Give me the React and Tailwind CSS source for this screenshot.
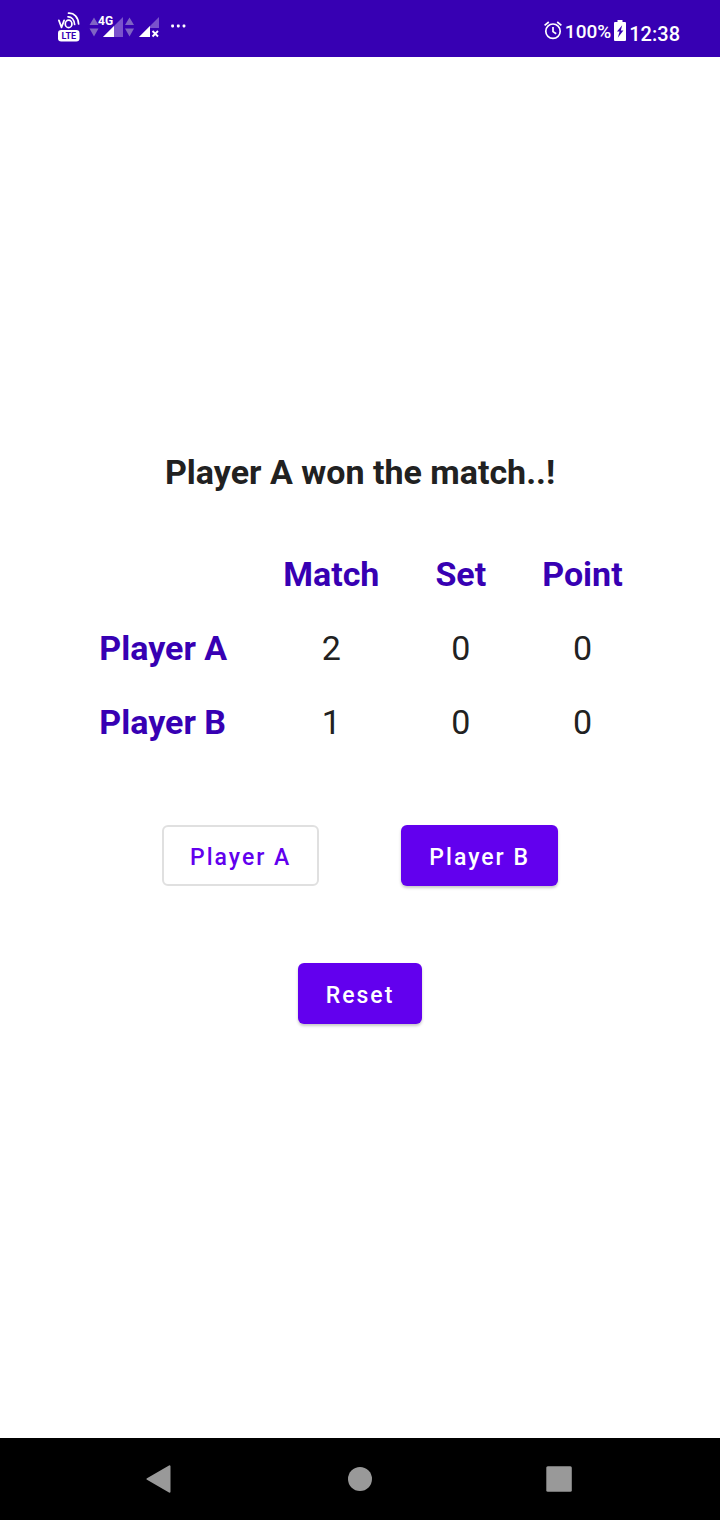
import React, { useState } from "react";

function VolteIcon() {
  return (
    <svg width="22" height="30" viewBox="0 0 22 30" aria-label="VoLTE" className="shrink-0">
      <g fill="none" stroke="#fff" strokeWidth="1.7" strokeLinecap="round">
        <path d="M0.9 8.4 L3.5 15.4 L6.1 8.4" strokeLinejoin="round" />
        <ellipse cx="10.6" cy="11.9" rx="3.3" ry="3.7" />
        <path d="M10 4.8 C13.5 4.6 16.2 7.5 16.6 12.5" />
        <path d="M10.5 1.2 C16 0.8 20.3 5 20.6 12" />
      </g>
      <rect x="0" y="18" width="21.5" height="11.5" rx="3.2" fill="#fff" />
      <text x="10.8" y="27" textAnchor="middle" fontSize="9" fontWeight="700" fill="#3700b3" className="font-['Roboto',sans-serif]">
        LTE
      </text>
    </svg>
  );
}

function SignalFourG() {
  return (
    <svg width="34" height="26" viewBox="0 0 34 26" aria-label="4G signal" className="shrink-0">
      <path d="M5 3.5 L9.5 11 H0.5 Z M0.5 14.5 H9.5 L5 22.5 Z" fill="#7f64c4" />
      <path d="M14 23 L34 3 V23 Z" fill="#7a52cc" />
      <path d="M14 23 L25 12 V23 Z" fill="#fff" />
      <path d="M10 0 H24 V11.5 H10 Z" fill="#3700b3" />
      <text x="9" y="11" fontSize="12" fontWeight="700" fill="#fff" className="font-['Roboto',sans-serif]">
        4G
      </text>
    </svg>
  );
}

function SignalNone() {
  return (
    <svg width="34" height="26" viewBox="0 0 34 26" aria-label="No signal" className="shrink-0">
      <path d="M4.5 3.5 L9 11 H0 Z M0 14.5 H9 L4.5 22.5 Z" fill="#7f64c4" />
      <path d="M14 23 L34 3 V14 H25 V23 Z" fill="#7a52cc" />
      <path d="M14 23 L25 12 V23 Z" fill="#fff" />
      <path d="M27.5 17 L33 22.5 M33 17 L27.5 22.5" stroke="#fff" strokeWidth="1.9" />
    </svg>
  );
}

function MoreDots() {
  return (
    <svg width="16" height="6" viewBox="0 0 16 6" aria-label="More" className="shrink-0">
      <g fill="#fff">
        <rect x="0.2" y="0.6" width="2.8" height="2.8" rx="0.8" />
        <rect x="5.9" y="0.6" width="2.8" height="2.8" rx="0.8" />
        <rect x="11.6" y="0.6" width="2.8" height="2.8" rx="0.8" />
      </g>
    </svg>
  );
}

function AlarmIcon() {
  return (
    <svg width="18" height="20" viewBox="0 0 18 20" aria-label="Alarm" className="shrink-0">
      <g fill="none" stroke="#fff" strokeWidth="1.7">
        <circle cx="9" cy="11.2" r="7.2" />
        <path d="M9 7 V11.6 L12.2 13.8" />
        <path d="M0.6 5.4 L4.8 2 M17.4 5.4 L13.2 2" />
      </g>
    </svg>
  );
}

function BatteryIcon() {
  return (
    <svg width="12" height="21" viewBox="0 0 12 21" aria-label="Battery charging" className="shrink-0">
      <path d="M3.5 0 H8.5 V2 H11 Q12 2 12 3 V20 Q12 21 11 21 H1 Q0 21 0 20 V3 Q0 2 1 2 H3.5 Z" fill="#fff" />
      <path d="M8.2 5.2 L3 11.6 H5.6 L3.8 17.8 L9.4 10.4 H6.8 Z" fill="#3700b3" />
    </svg>
  );
}

function StatusBar() {
  return (
    <header className="flex h-[57px] items-start justify-between bg-[#3700b3] pr-10 pl-[58px] font-medium text-white">
      <div className="flex items-center pt-3">
        <VolteIcon />
        <div className="flex items-center gap-[2px] pl-[9px]">
          <SignalFourG />
          <SignalNone />
        </div>
        <div className="pl-3">
          <MoreDots />
        </div>
      </div>
      <div className="flex items-start gap-[3px] pt-5">
        <AlarmIcon />
        <span className="text-[19px] leading-6">100%</span>
        <BatteryIcon />
        <span className="pt-[2px] text-xl leading-6">12:38</span>
      </div>
    </header>
  );
}

function NavBar() {
  return (
    <nav className="grid h-[82px] grid-cols-3 bg-black px-[60px]">
      <button type="button" aria-label="Back" className="flex items-center justify-center">
        <svg width="28" height="28" viewBox="0 0 28 28">
          <path d="M1.5 14 L23.5 1.3 V26.7 Z" fill="#999" stroke="#999" strokeWidth="2" strokeLinejoin="round" />
        </svg>
      </button>
      <button type="button" aria-label="Home" className="flex items-center justify-center">
        <svg width="28" height="28" viewBox="0 0 28 28">
          <circle cx="14" cy="14" r="12" fill="#999" />
        </svg>
      </button>
      <button type="button" aria-label="Recent apps" className="flex items-center justify-center">
        <svg width="28" height="28" viewBox="0 0 28 28">
          <rect x="0.3" y="1.2" width="25.5" height="25.5" rx="1.5" fill="#999" />
        </svg>
      </button>
    </nav>
  );
}

const buttonBase = "h-[61px] rounded-md pt-1.5 text-[23px] font-medium tracking-[2px]";
const filledButton = buttonBase + " bg-[#6200ee] px-7 text-white shadow-[0_2px_3px_rgba(0,0,0,0.22)]";
const outlinedButton = buttonBase + " border-2 border-[#e0e0e0] bg-white px-[26px] text-[#6200ee]";

const initialScores = [
  { name: "Player A", match: 2, set: 0, point: 0 },
  { name: "Player B", match: 1, set: 0, point: 0 },
];

export default function App() {
  const [scores, setScores] = useState(initialScores);

  const addPoint = (index) =>
    setScores((rows) => rows.map((row, i) => (i === index ? { ...row, point: row.point + 1 } : row)));

  return (
    <div className="flex min-h-screen flex-col bg-white font-['Roboto',sans-serif]">
      <StatusBar />
      <main className="flex flex-1 flex-col items-center justify-center pb-5 text-[#212121]">
        <h1 className="text-[34px] leading-10 font-bold">Player A won the match..!</h1>
        <table className="mt-[45px] text-[34px] leading-10">
          <thead className="text-[#3700b3]">
            <tr>
              <td />
              <th scope="col" className="px-7 py-[17px] font-bold">Match</th>
              <th scope="col" className="px-7 py-[17px] font-bold">Set</th>
              <th scope="col" className="px-7 py-[17px] font-bold">Point</th>
            </tr>
          </thead>
          <tbody className="text-center">
            {scores.map((row) => (
              <tr key={row.name}>
                <th scope="row" className="py-[17px] pr-7 pl-[30px] text-left font-bold text-[#3700b3]">{row.name}</th>
                <td>{row.match}</td>
                <td>{row.set}</td>
                <td>{row.point}</td>
              </tr>
            ))}
          </tbody>
        </table>
        <div className="mt-[66px] flex gap-[82px]">
          <button type="button" className={outlinedButton} onClick={() => addPoint(0)}>Player A</button>
          <button type="button" className={filledButton} onClick={() => addPoint(1)}>Player B</button>
        </div>
        <button type="button" className={"mt-[77px] " + filledButton} onClick={() => setScores(initialScores)}>
          Reset
        </button>
      </main>
      <NavBar />
    </div>
  );
}
